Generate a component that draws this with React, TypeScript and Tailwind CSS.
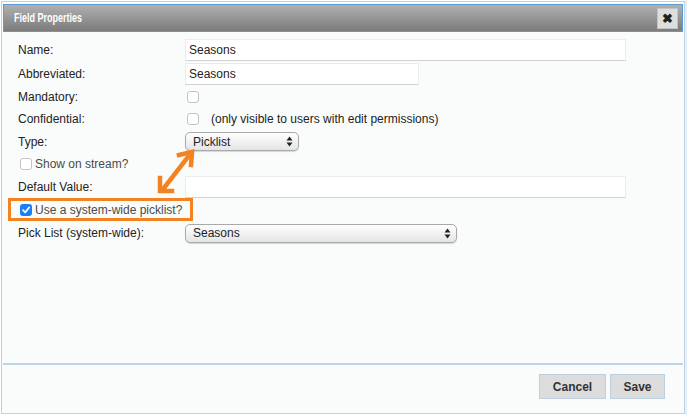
import React from 'react';

const Checkbox: React.FC<{ checked?: boolean }> = ({ checked }) =>
  checked ? (
    <span className="flex h-[12px] w-[12px] items-center justify-center rounded-[3px] bg-[#1a7ef7]">
      <svg width="10" height="10" viewBox="0 0 10 10">
        <path d="M2 5.2 L4.2 7.4 L8.2 2.4" stroke="white" strokeWidth="1.8" fill="none" strokeLinecap="round" strokeLinejoin="round" />
      </svg>
    </span>
  ) : (
    <span className="block h-[12px] w-[12px] rounded-[3px] border border-[#c4c4c4] bg-white" />
  );

const Select: React.FC<{ value: string; width: string }> = ({ value, width }) => (
  <div className={`flex h-[19px] ${width} items-center justify-between rounded-[5px] border border-[#a9a9a9] bg-gradient-to-b from-white to-[#e4e4e4] pl-[7px] pr-[5px] shadow-[0_1px_1px_rgba(0,0,0,0.15)]`}>
    <span>{value}</span>
    <svg width="7" height="11" viewBox="0 0 7 11">
      <path d="M3.5 0.5 L6.5 4.5 L0.5 4.5 Z" fill="#222" />
      <path d="M3.5 10.5 L6.5 6.5 L0.5 6.5 Z" fill="#222" />
    </svg>
  </div>
);

const TextInput: React.FC<{ value?: string; width: string }> = ({ value, width }) => (
  <div className={`flex h-[22px] ${width} items-center border border-[#ececec] border-b-[#d2d2d2] bg-white pl-[3px]`}>
    {value}
  </div>
);

const Row: React.FC<{ label?: string; h: string; children?: React.ReactNode }> = ({ label, h, children }) => (
  <div className={`flex ${h} items-center`}>
    <div className="w-[167px] shrink-0">{label}</div>
    {children}
  </div>
);

const App: React.FC = () => {
  return (
    <div className="relative h-[415px] w-[687px] overflow-hidden bg-white text-[12px] text-[#222]" style={{ fontFamily: '"Liberation Sans", Arial, sans-serif' }}>
      <div className="ml-[1px] mt-[1px] flex h-[413px] w-[684px] flex-col border border-[#b9d3ea] bg-[#fafcfc]">
        {/* title bar */}
        <div className="mx-[1px] mt-[2px] flex h-[28px] items-center justify-between border border-[#5f9bd3] bg-gradient-to-b from-[#b0b0b0] to-[#7c7c7c] pl-[10px] pr-[4px]">
          <span className="inline-block origin-left scale-x-[0.72] text-[12.5px] font-bold text-white">Field Properties</span>
          <div className="flex h-[21px] w-[21px] items-center justify-center border border-[#c2c2c2] bg-[#dedede] text-[13px] font-bold leading-none text-[#222]">
            ✖
          </div>
        </div>

        {/* form */}
        <div className="flex-1 pl-[16px] pt-[5px]">
          <Row label="Name:" h="h-[25px]">
            <TextInput value="Seasons" width="w-[441px]" />
          </Row>
          <Row label="Abbreviated:" h="h-[24px]">
            <TextInput value="Seasons" width="w-[234px]" />
          </Row>
          <Row label="Mandatory:" h="h-[22px]">
            <span className="ml-[2px]">
              <Checkbox />
            </span>
          </Row>
          <Row label="Confidential:" h="h-[22px]">
            <span className="ml-[2px]">
              <Checkbox />
            </span>
            <span className="ml-[12px]">(only visible to users with edit permissions)</span>
          </Row>
          <Row label="Type:" h="h-[23px]">
            <Select value="Picklist" width="w-[114px]" />
          </Row>
          <div className="flex h-[22px] items-center pl-[2px] text-[#4a4a4a]">
            <Checkbox />
            <span className="ml-[3px]">Show on stream?</span>
          </div>
          <Row label="Default Value:" h="h-[23px]">
            <TextInput width="w-[441px]" />
          </Row>
          <div className="flex h-[23px] items-center pl-[2px] text-[#4a4a4a]">
            <Checkbox checked />
            <span className="ml-[3px]">Use a system-wide picklist?</span>
          </div>
          <Row label="Pick List (system-wide):" h="h-[24px]">
            <Select value="Seasons" width="w-[272px]" />
          </Row>
        </div>

        {/* footer */}
        <div className="mx-[1px] flex h-[50px] items-start justify-end gap-[4px] border-t-2 border-[#bcd5eb] pr-[18px] pt-[9px]">
          <button className="h-[25px] w-[67px] border border-[#bccfe0] bg-[#dcdcdc] text-[12px] font-bold text-[#333]">Cancel</button>
          <button className="h-[25px] w-[55px] border border-[#bccfe0] bg-[#dcdcdc] text-[12px] font-bold text-[#333]">Save</button>
        </div>
      </div>

      {/* annotations */}
      <div className="absolute left-[8px] top-[198px] h-[23px] w-[185px] border-[3px] border-[#f58220]" />
      <svg className="absolute left-[150px] top-[145px]" width="50" height="52" viewBox="0 0 50 52">
        <g stroke="#f58220" strokeWidth="4.5" fill="none" strokeLinecap="square">
          <path d="M14 43 L38 12" />
          <path d="M29 10 L42 7 L41 20" />
          <path d="M10 33 L10 46 L22 46" />
        </g>
      </svg>
      <div className="absolute right-0 top-0 h-[415px] w-[2px] bg-[#e8eef4]" />
    </div>
  );
};

export default App;
